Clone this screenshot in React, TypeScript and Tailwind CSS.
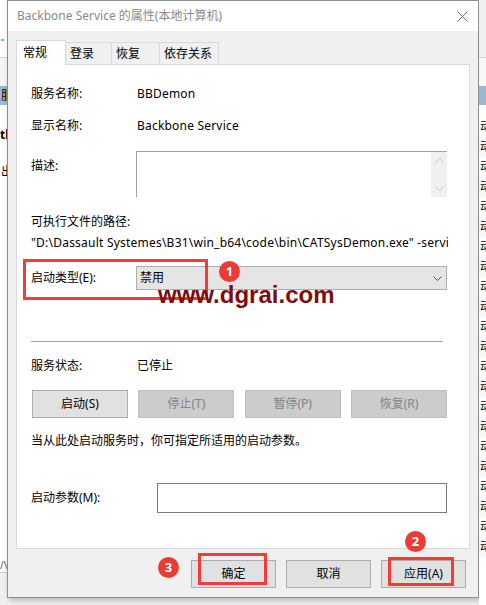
import React from 'react';

const tabs = [
  { label: '常规', w: 'w-[50px]', active: true },
  { label: '登录', w: 'w-[46px]', active: false },
  { label: '恢复', w: 'w-[48px]', active: false },
  { label: '依存关系', w: 'w-[59px]', active: false },
];

const Chevron = ({ className, up }: { className?: string; up?: boolean }) => (
  <svg className={className} width="9" height="5" viewBox="0 0 9 5" fill="none">
    <path d={up ? 'M0.5 4.5 L4.5 0.5 L8.5 4.5' : 'M0.5 0.5 L4.5 4.5 L8.5 0.5'} stroke="currentColor" strokeWidth="1" />
  </svg>
);

const RedDot = ({ n, className }: { n: string; className: string }) => (
  <div className={`absolute flex h-[21px] w-[21px] items-center justify-center rounded-full bg-[#eb3b35] text-[13px] font-bold leading-none text-white ${className}`}>
    {n}
  </div>
);

const App: React.FC = () => {
  return (
    <div className="relative flex h-[605px] w-[486px] overflow-hidden bg-[#f0f0f0] font-[family-name:'Noto_Sans','Noto_Sans_CJK_SC',sans-serif] text-[12px] text-black">
      {/* background window, left edge */}
      <div className="flex w-[7px] shrink-0 flex-col overflow-hidden bg-white">
        <div className="h-[57px] bg-white pt-[39px] pl-[1px]">
          <div className="h-[2px] w-[3px] bg-[#3bc6e8]" />
        </div>
        <div className="h-[29px] border-t border-[#d4d4d4] bg-[#f5f5f5]" />
        <div className="h-[19px] overflow-hidden whitespace-nowrap bg-[#9fb6d2] pl-[1px] leading-[19px]">服</div>
        <div className="h-[21px]" />
        <div className="h-[18px] overflow-hidden whitespace-nowrap font-bold leading-[18px]">tb</div>
        <div className="h-[19px]" />
        <div className="h-[18px] overflow-hidden whitespace-nowrap pl-[1px] leading-[18px]">出</div>
        <div className="flex-1" />
        <div className="h-[14px] overflow-hidden text-[10px] leading-[14px] text-[#555]">/\</div>
        <div className="h-[33px] border-t border-[#c8c8c8] bg-[#f0f0f0]" />
      </div>

      {/* dialog */}
      <div className="flex h-[598px] w-[472px] shrink-0 flex-col border border-[#8f8f8f] bg-[#f0f0f0] shadow-[2px_2px_6px_rgba(0,0,0,0.25)]">
        <div className="flex h-[30px] items-center justify-between bg-white pl-[9px] pr-[9px]">
          <span className="text-[12px] text-[#8a8a8a]">Backbone Service 的属性(本地计算机)</span>
          <svg width="11" height="11" viewBox="0 0 11 11" className="mr-[1px] text-[#707070]">
            <path d="M0.5 0.5 L10.5 10.5 M10.5 0.5 L0.5 10.5" stroke="currentColor" strokeWidth="1" />
          </svg>
        </div>

        <div className="flex flex-1 flex-col px-[8px] pt-[9px]">
          <div className="relative z-10 flex h-[24px] items-start">
            {tabs.map((t) =>
              t.active ? (
                <div key={t.label} className={`${t.w} flex h-[25px] items-center border-x border-t border-[#d9d9d9] bg-white pl-[6px]`}>
                  {t.label}
                </div>
              ) : (
                <div key={t.label} className={`${t.w} mt-[2px] flex h-[22px] items-center border-r border-t border-[#d9d9d9] bg-[#f0f0f0] pl-[4px]`}>
                  {t.label}
                </div>
              )
            )}
          </div>

          <div className="h-[485px] border border-[#d9d9d9] bg-white pl-[14px]">
            <div className="mt-[20px] flex h-[18px] items-center">
              <span className="w-[106px]">服务名称:</span>
              <span className="tracking-[0.2px]">BBDemon</span>
            </div>
            <div className="mt-[14px] flex h-[18px] items-center">
              <span className="w-[106px]">显示名称:</span>
              <span className="tracking-[0.2px]">Backbone Service</span>
            </div>
            <div className="mt-[16px] flex h-[46px]">
              <span className="w-[105px] pt-[6px] leading-[18px]">描述:</span>
              <div className="flex w-[311px] border-l border-t border-[#a0a0a0] bg-white">
                <div className="flex-1" />
                <div className="flex w-[16px] flex-col items-center justify-between bg-[#f0f0f0] py-[6px] text-[#c4c4c4]">
                  <Chevron up />
                  <Chevron />
                </div>
              </div>
            </div>
            <div className="mt-[16px] h-[18px] leading-[18px]">可执行文件的路径:</div>
            <div className="mt-[3px] h-[18px] w-[417px] overflow-hidden whitespace-nowrap leading-[18px] tracking-[0.22px]">
              "D:\Dassault Systemes\B31\win_b64\code\bin\CATSysDemon.exe" -service
            </div>
            <div className="mt-[14px] flex h-[24px] items-center">
              <span className="w-[105px]">启动类型(E):</span>
              <div className="flex h-[24px] w-[311px] items-center justify-between border border-[#adadad] bg-[#e5e5e5] pl-[3px] pr-[4px]">
                <span>禁用</span>
                <Chevron className="text-[#505050]" />
              </div>
            </div>
            <div className="mt-[51px] h-px w-[412px] bg-[#a0a0a0]" />
            <div className="mt-[15px] flex h-[18px] items-center">
              <span className="w-[106px]">服务状态:</span>
              <span>已停止</span>
            </div>
            <div className="mt-[15px] flex w-[416px] justify-between pl-[1px]">
              <div className="flex h-[28px] w-[96px] items-center justify-center border border-[#adadad] bg-[#e1e1e1]">启动(S)</div>
              <div className="flex h-[28px] w-[96px] items-center justify-center border border-[#bfbfbf] bg-[#cccccc] text-[#838383]">停止(T)</div>
              <div className="flex h-[28px] w-[96px] items-center justify-center border border-[#bfbfbf] bg-[#cccccc] text-[#838383]">暂停(P)</div>
              <div className="flex h-[28px] w-[96px] items-center justify-center border border-[#bfbfbf] bg-[#cccccc] text-[#838383]">恢复(R)</div>
            </div>
            <div className="mt-[14px] h-[18px] leading-[18px]">当从此处启动服务时，你可指定所适用的启动参数。</div>
            <div className="mt-[33px] flex h-[30px] items-center">
              <span className="w-[126px]">启动参数(M):</span>
              <div className="h-[30px] w-[290px] border border-[#7a7a7a] bg-white" />
            </div>
          </div>

          <div className="mt-[11px] flex justify-end gap-[10px] pr-[4px]">
            <div className="flex h-[28px] w-[85px] items-center justify-center border border-[#adadad] bg-[#e1e1e1]">确定</div>
            <div className="flex h-[28px] w-[85px] items-center justify-center border border-[#adadad] bg-[#e1e1e1]">取消</div>
            <div className="flex h-[28px] w-[85px] items-center justify-center border border-[#adadad] bg-[#e1e1e1]">应用(A)</div>
          </div>
        </div>
      </div>

      {/* background window, right edge */}
      <div className="flex flex-1 flex-col overflow-hidden bg-white">
        <div className="h-[57px] bg-[#f0f0f0]" />
        <div className="h-[29px] border-t border-[#d4d4d4] bg-[#f7f7f7]" />
        <div className="h-[19px] bg-[#9fb6d2]" />
        <div className="h-[12px]" />
        {Array.from({ length: 22 }).map((_, i) => (
          <div key={i} className={`h-[20px] overflow-hidden whitespace-nowrap pl-[1px] leading-[20px] ${i % 2 ? 'bg-[#f7f7f7]' : 'bg-white'}`}>
            动
          </div>
        ))}
      </div>

      {/* annotations */}
      <div className="absolute left-[23px] top-[259px] h-[41px] w-[185px] border-[3px] border-[#f23b3b]" />
      <RedDot n="1" className="left-[219px] top-[261px]" />
      <div className="absolute left-[158px] top-[281px] font-[family-name:'Liberation_Sans',sans-serif] text-[24px] font-bold leading-[28px] text-[#820b0b]">
        www.dgrai.com
      </div>
      <RedDot n="3" className="left-[158px] top-[557px]" />
      <RedDot n="2" className="left-[405px] top-[531px]" />
      <div className="absolute left-[198px] top-[553px] h-[32px] w-[69px] border-[3px] border-[#f23b3b]" />
      <div className="absolute left-[388px] top-[557px] h-[29px] w-[66px] border-[3px] border-[#f23b3b]" />
    </div>
  );
};

export default App;
